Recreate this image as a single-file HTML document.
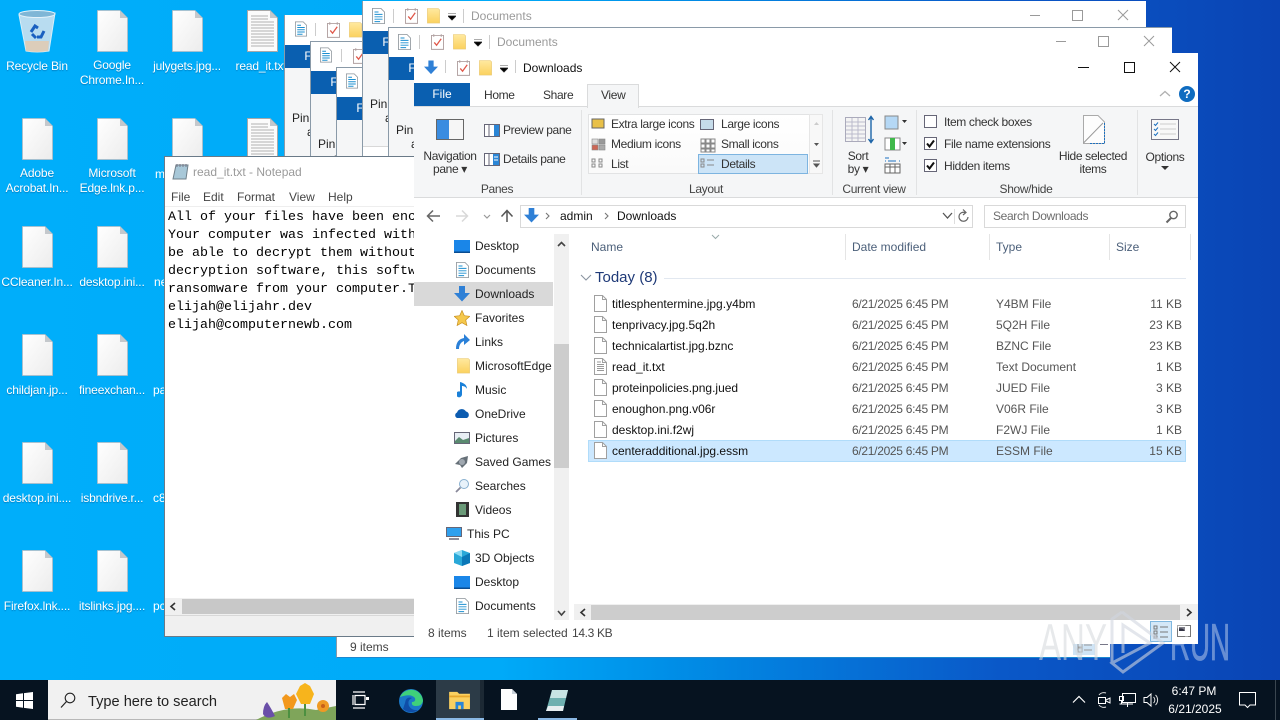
<!DOCTYPE html>
<html><head><meta charset="utf-8"><title>Desktop</title>
<style>
html,body{margin:0;padding:0}
body{width:1280px;height:720px;overflow:hidden;position:relative;font:12px/16px "Liberation Sans",sans-serif;color:#222;background:linear-gradient(90deg,#00aefa 0,#00aaf8 500px,#0090e8 660px,#0a58c8 1000px,#0a44b4 1280px)}
div,svg,span{position:absolute}
.t{white-space:nowrap}
.c{transform:translateX(-50%);text-align:center}
.l{color:#fff;white-space:nowrap;transform:translateX(-50%);text-align:center;letter-spacing:-.15px;text-shadow:0 1px 1px rgba(0,40,90,.35)}
.w{background:#fff}
.g{color:#9a9a9a}
.f{background:#0a5fb0;color:#fff;text-align:center}
.r{background:#f5f6f7}
.n{left:475px;color:#222}
.d{left:852px;color:#555;letter-spacing:-.3px}
.y{left:996px;color:#555}
.s{left:1120px;width:62px;text-align:right;color:#555}
.m{left:612px;color:#111}
.h{color:#4c607a;top:239px}
.rb{letter-spacing:-.35px}
</style></head><body>
<svg width="0" height="0" style="left:0;top:0">
<defs>
<linearGradient id="fg" x1="0" y1="0" x2="1" y2="1"><stop offset="0" stop-color="#fff"/><stop offset="1" stop-color="#ececec"/></linearGradient>
<linearGradient id="fo" x1="0" y1="0" x2="0" y2="1"><stop offset="0" stop-color="#ffe9a0"/><stop offset="1" stop-color="#fbd15e"/></linearGradient>
<symbol id="file" viewBox="0 0 31 42"><path d="M.5.5H23L30.5 8V41.5H.5Z" fill="url(#fg)" stroke="#b4bcc4" stroke-width=".8"/><path d="M23 .5V8H30.5Z" fill="#c4c8cc"/></symbol>
<symbol id="txt" viewBox="0 0 31 42"><path d="M.5.5H23L30.5 8V41.5H.5Z" fill="#fbfbfb" stroke="#a8a8a8"/><path d="M23 .5V8H30.5Z" fill="#c4c8cc"/><path d="M4 6H21M4 9H21M4 12H27M4 15H27M4 18H27M4 21H27M4 24H27M4 27H27M4 30H27M4 33H27M4 36H27" stroke="#b0b0b0"/></symbol>
<symbol id="sf" viewBox="0 0 13 17"><path d="M.5.5H8.5L12.500 4.500V16.500H.5Z" fill="#fff" stroke="#a0a0a0"/><path d="M8.500.5V4.500H12.500" fill="none" stroke="#a0a0a0"/></symbol>
<symbol id="st" viewBox="0 0 13 17"><path d="M.5.5H8.500L12.500 4.500V16.500H.5Z" fill="#fff" stroke="#a0a0a0"/><path d="M8.500.5V4.500H12.500" fill="none" stroke="#a0a0a0"/><path d="M3 4H7M3 6.500H10M3 8.500H10M3 10.500H10M3 12.500H10" stroke="#999"/></symbol>
<symbol id="doc" viewBox="0 0 16 20"><path d="M.5.500H11L15.500 5V19.500H.5Z" fill="#fff" stroke="#8a9298"/><path d="M3 5H8M3 8H13M3 11H13M3 14H13M3 17H10" stroke="#1b8fd0" stroke-width="1.200"/></symbol>
<symbol id="chk" viewBox="0 0 14 18"><path d="M.5 2.500H13.500V17.500H.5Z" fill="#fff" stroke="#b0a0a0"/><path d="M3 1V4M11 1V4" stroke="#b0a0a0"/><path d="M3.500 10L6 13L11 6" fill="none" stroke="#e0584a" stroke-width="1.400"/></symbol>
<symbol id="fol" viewBox="0 0 13 17"><path d="M0 .5H11.500L13 2V16H0Z" fill="url(#fo)" stroke="#e8c878" stroke-width=".6"/></symbol>
<symbol id="dl" viewBox="0 0 16 16"><path d="M5 0H11V7H16L8 15.500L0 7H5Z" fill="#2f80d6"/></symbol>
<symbol id="mon" viewBox="0 0 16 13"><rect width="16" height="12" fill="#1a86e8"/><rect y="11.500" width="16" height="1.500" fill="#0a4c90"/></symbol>
</defs></svg>

<!-- desktop icons -->
<svg style="left:17px;top:9px" width="40" height="44" viewBox="0 0 40 44"><path d="M2 6L38 4L32 42Q20 44 9 42Z" fill="#b8dcf0" stroke="#d8eef8"/><ellipse cx="20" cy="5" rx="18" ry="3.500" fill="#7fb6d6" stroke="#e4f2fa"/><path d="M8 32L32 32L31 42Q20 44 9 42Z" fill="#e8c8a8" opacity=".75"/><path d="M14 23l4-6 3 2M27 22l-3 6h-4M15 25l4 4" fill="none" stroke="#1a60c0" stroke-width="3"/></svg>
<svg style="left:97px;top:10px" width="31" height="42"><use href="#file" width="31" height="42"/></svg>
<svg style="left:172px;top:10px" width="31" height="42"><use href="#file" width="31" height="42"/></svg>
<svg style="left:247px;top:10px" width="31" height="42"><use href="#txt" width="31" height="42"/></svg>
<svg style="left:22px;top:118px" width="31" height="42"><use href="#file" width="31" height="42"/></svg>
<svg style="left:97px;top:118px" width="31" height="42"><use href="#file" width="31" height="42"/></svg>
<svg style="left:172px;top:118px" width="31" height="42"><use href="#file" width="31" height="42"/></svg>
<svg style="left:247px;top:118px" width="31" height="42"><use href="#txt" width="31" height="42"/></svg>
<svg style="left:22px;top:226px" width="31" height="42"><use href="#file" width="31" height="42"/></svg>
<svg style="left:97px;top:226px" width="31" height="42"><use href="#file" width="31" height="42"/></svg>
<svg style="left:22px;top:334px" width="31" height="42"><use href="#file" width="31" height="42"/></svg>
<svg style="left:97px;top:334px" width="31" height="42"><use href="#file" width="31" height="42"/></svg>
<svg style="left:22px;top:442px" width="31" height="42"><use href="#file" width="31" height="42"/></svg>
<svg style="left:97px;top:442px" width="31" height="42"><use href="#file" width="31" height="42"/></svg>
<svg style="left:22px;top:550px" width="31" height="42"><use href="#file" width="31" height="42"/></svg>
<svg style="left:97px;top:550px" width="31" height="42"><use href="#file" width="31" height="42"/></svg>
<div class="l" style="left:37px;top:58px">Recycle Bin</div>
<div class="l" style="left:112px;top:58px;line-height:15px">Google<br>Chrome.In...</div>
<div class="l" style="left:187px;top:58px">julygets.jpg...</div>
<div class="l" style="left:261px;top:58px">read_it.txt</div>
<div class="l" style="left:37px;top:166px;line-height:15px">Adobe<br>Acrobat.In...</div>
<div class="l" style="left:112px;top:166px;line-height:15px">Microsoft<br>Edge.lnk.p...</div>
<div class="l" style="left:37px;top:274px">CCleaner.In...</div>
<div class="l" style="left:112px;top:274px">desktop.ini...</div>
<div class="l" style="left:37px;top:382px">childjan.jp...</div>
<div class="l" style="left:112px;top:382px">fineexchan...</div>
<div class="l" style="left:37px;top:490px">desktop.ini....</div>
<div class="l" style="left:112px;top:490px">isbndrive.r...</div>
<div class="l" style="left:37px;top:598px">Firefox.lnk....</div>
<div class="l" style="left:112px;top:598px">itslinks.jpg....</div>
<div class="t" style="left:155px;top:166px;color:#fff">m</div>
<div class="t" style="left:154px;top:274px;color:#fff">ne</div>
<div class="t" style="left:153px;top:382px;color:#fff">pa</div>
<div class="t" style="left:153px;top:490px;color:#fff">c8</div>
<div class="t" style="left:153px;top:598px;color:#fff">pc</div>

<!-- W1 -->
<div class="w" style="left:284px;top:15px;width:400px;height:615px;border-left:1px solid #8a9aa8;box-sizing:border-box;overflow:hidden">
<div class="f" style="left:0;top:30px;width:60px;height:23px;line-height:23px;text-indent:-14px">F</div>
<div class="r" style="left:0;top:53px;width:400px;height:90px"></div>
<div class="t" style="left:7px;top:95px">Pin</div>
<div class="t" style="left:22px;top:109px">a</div>
<svg style="left:10px;top:6px" width="12" height="16"><use href="#doc" width="12" height="16"/></svg>
<div style="left:30px;top:8px;width:1px;height:13px;background:#ccc"></div>
<svg style="left:42px;top:6px" width="13" height="17"><use href="#chk" width="13" height="17"/></svg>
<svg style="left:64px;top:7px" width="13" height="16"><use href="#fol" width="13" height="16"/></svg>
</div>
<!-- W2 -->
<div class="w" style="left:310px;top:41px;width:400px;height:589px;border-left:1px solid #8a9aa8;border-top:1px solid #8a9aa8;box-sizing:border-box;overflow:hidden">
<div class="f" style="left:0;top:29px;width:60px;height:23px;line-height:23px;text-indent:-14px">F</div>
<div class="r" style="left:0;top:52px;width:400px;height:90px"></div>
<div class="t" style="left:7px;top:94px">Pin</div>
<div class="t" style="left:22px;top:108px">a</div>
<svg style="left:9px;top:5px" width="12" height="16"><use href="#doc" width="12" height="16"/></svg>
<div style="left:30px;top:7px;width:1px;height:13px;background:#ccc"></div>
<svg style="left:42px;top:5px" width="13" height="17"><use href="#chk" width="13" height="17"/></svg>
</div>
<!-- W3 -->
<div class="w" style="left:336px;top:67px;width:774px;height:591px;border-left:1px solid #8a9aa8;border-top:1px solid #8a9aa8;border-bottom:1px solid #1c88d0;box-sizing:border-box;overflow:hidden">
<div class="f" style="left:0;top:29px;width:60px;height:23px;line-height:23px;text-indent:-14px">F</div>
<div class="r" style="left:0;top:52px;width:400px;height:90px"></div>
<svg style="left:9px;top:5px" width="12" height="16"><use href="#doc" width="12" height="16"/></svg>
<div class="t" style="left:13px;top:571px;color:#444">9 items</div>
<div style="left:736px;top:566px;width:22px;height:21px;background:#cfe4f5"></div>
<svg style="left:739px;top:569px" width="34" height="16"><path d="M2 1h4v4h-4zM2 6h4v4h-4zM2 11h4v4h-4zM8 3h8M8 8h8M8 13h8" fill="none" stroke="#999"/><rect x="24" y="2" width="8" height="6" fill="#778"/></svg>
</div>
<!-- W4 -->
<div class="w" style="left:362px;top:1px;width:784px;height:300px;border-left:1px solid #8a9aa8;box-sizing:border-box;overflow:hidden">
<div class="f" style="left:0;top:30px;width:60px;height:23px;line-height:23px;text-indent:-14px">F</div>
<div class="r" style="left:0;top:53px;width:784px;height:92px"></div>
<div style="left:0;top:145px;width:784px;height:1px;background:#d8d8d8"></div>
<div class="t" style="left:7px;top:95px">Pin</div>
<div class="t" style="left:22px;top:109px">a</div>
<svg style="left:9px;top:7px" width="13" height="16"><use href="#doc" width="13" height="16"/></svg>
<div style="left:30px;top:8px;width:1px;height:14px;background:#ccc"></div>
<svg style="left:42px;top:6px" width="13" height="17"><use href="#chk" width="13" height="17"/></svg>
<svg style="left:64px;top:7px" width="13" height="16"><use href="#fol" width="13" height="16"/></svg>
<svg style="left:85px;top:12px" width="8" height="8"><path d="M0 0h8M0 3h8L4 7z" stroke="#222" stroke-width=".8"/></svg>
<div style="left:100px;top:8px;width:1px;height:14px;background:#ccc"></div>
<div class="t g" style="left:108px;top:7px">Documents</div>
<svg style="left:667px;top:6px" width="100" height="16"><path d="M0 8.500H10M42.500 3.500h10v10h-10zM88 3l10 10M98 3L88 13" fill="none" stroke="#9a9a9a"/></svg>
</div>
<!-- W5 -->
<div class="w" style="left:388px;top:27px;width:784px;height:300px;border-left:1px solid #8a9aa8;border-top:1px solid #8a9aa8;box-sizing:border-box;overflow:hidden">
<div class="f" style="left:0;top:29px;width:60px;height:23px;line-height:23px;text-indent:-14px">F</div>
<div class="r" style="left:0;top:52px;width:784px;height:92px"></div>
<div class="t" style="left:7px;top:94px">Pin</div>
<div class="t" style="left:22px;top:108px">a</div>
<svg style="left:9px;top:6px" width="13" height="16"><use href="#doc" width="13" height="16"/></svg>
<div style="left:30px;top:7px;width:1px;height:14px;background:#ccc"></div>
<svg style="left:42px;top:5px" width="13" height="17"><use href="#chk" width="13" height="17"/></svg>
<svg style="left:64px;top:6px" width="13" height="16"><use href="#fol" width="13" height="16"/></svg>
<svg style="left:85px;top:11px" width="8" height="8"><path d="M0 0h8M0 3h8L4 7z" stroke="#222" stroke-width=".8"/></svg>
<div style="left:100px;top:7px;width:1px;height:14px;background:#ccc"></div>
<div class="t g" style="left:108px;top:6px">Documents</div>
<svg style="left:667px;top:5px" width="100" height="16"><path d="M0 8.500H10M42.500 3.500h10v10h-10zM88 3l10 10M98 3L88 13" fill="none" stroke="#9a9a9a"/></svg>
</div>

<!-- Notepad -->
<div class="w" style="left:164px;top:156px;width:250px;height:481px;border-left:1px solid #6a7a88;border-top:1px solid #6a7a88;border-bottom:1px solid #6a7a88;box-sizing:border-box;overflow:hidden">
<svg style="left:7px;top:6px" width="18" height="18" viewBox="0 0 18 18"><path d="M4 2H16L14 16H1Z" fill="#a8c8d8" stroke="#70808a"/><path d="M5 1V4M8 1V4M11 1V4M14 1V4" stroke="#778"/></svg>
<div class="t g" style="left:28px;top:7px">read_it.txt - Notepad</div>
<div class="t" style="left:6px;top:32px;color:#444">File</div>
<div class="t" style="left:38px;top:32px;color:#444">Edit</div>
<div class="t" style="left:72px;top:32px;color:#444">Format</div>
<div class="t" style="left:124px;top:32px;color:#444">View</div>
<div class="t" style="left:163px;top:32px;color:#444">Help</div>
<div style="left:0;top:49px;width:250px;height:1px;background:#eee"></div>
<div class="t" style="left:3px;top:52px;font:13.33px/18px 'Liberation Mono',monospace;color:#000">All of your files have been encrypted<br>Your computer was infected with a<br>be able to decrypt them without a<br>decryption software, this software<br>ransomware from your computer.To<br>elijah@elijahr.dev<br>elijah@computernewb.com</div>
<div style="left:0;top:441px;width:250px;height:17px;background:#f0f0f0"></div>
<div style="left:17px;top:442px;width:233px;height:15px;background:#c8c8c8"></div>
<svg style="left:4px;top:445px" width="9" height="9"><path d="M6 1L2 4.500L6 8" fill="none" stroke="#333" stroke-width="1.600"/></svg>
<div style="left:0;top:458px;width:250px;height:22px;background:#f0f0f0;border-top:1px solid #d8d8d8"></div>
</div>

<!-- Explorer -->
<div class="w" style="left:414px;top:53px;width:784px;height:591px"></div>
<svg style="left:424px;top:60px" width="14" height="15"><use href="#dl" width="14" height="15"/></svg>
<div style="left:445px;top:60px;width:1px;height:13px;background:#ccc"></div>
<svg style="left:457px;top:59px" width="13" height="17"><use href="#chk" width="13" height="17"/></svg>
<svg style="left:479px;top:60px" width="13" height="16"><use href="#fol" width="13" height="16"/></svg>
<svg style="left:500px;top:65px" width="8" height="8"><path d="M0 0h8M0 3h8L4 7z" stroke="#222" stroke-width=".8"/></svg>
<div style="left:515px;top:60px;width:1px;height:13px;background:#ccc"></div>
<div class="t" style="left:523px;top:60px;color:#111">Downloads</div>
<svg style="left:1078px;top:60px" width="106" height="16"><path d="M0 7.500H11M46.500 2.500h10v10h-10zM92 2l10 10M102 2L92 12" fill="none" stroke="#111"/></svg>
<div class="f" style="left:414px;top:83px;width:56px;height:23px;line-height:23px">File</div>
<div class="t rb" style="left:484px;top:87px;color:#333">Home</div>
<div class="t rb" style="left:543px;top:87px;color:#333">Share</div>
<svg style="left:1159px;top:90px" width="12" height="8"><path d="M1 6L6 1.500L11 6" fill="none" stroke="#b0b0b0" stroke-width="1.300"/></svg>
<div class="c" style="left:1187px;top:86px;width:16px;height:16px;border-radius:8px;background:#0f6cc0;color:#fff;font-weight:bold;line-height:16px">?</div>
<div class="r" style="left:414px;top:106px;width:784px;height:92px;border-top:1px solid #dadbdc;border-bottom:1px solid #dadbdc;box-sizing:border-box"></div>
<div style="left:587px;top:84px;width:52px;height:24px;background:#f5f6f7;border:1px solid #dadbdc;border-bottom:0;box-sizing:border-box"></div>
<div class="t rb" style="left:601px;top:87px;color:#333">View</div>
<!-- ribbon separators -->
<div style="left:581px;top:110px;width:1px;height:85px;background:#e2e3e4"></div>
<div style="left:832px;top:110px;width:1px;height:85px;background:#e2e3e4"></div>
<div style="left:916px;top:110px;width:1px;height:85px;background:#e2e3e4"></div>
<div style="left:1137px;top:110px;width:1px;height:85px;background:#e2e3e4"></div>
<!-- panes -->
<svg style="left:436px;top:119px" width="28" height="21"><rect x=".5" y=".5" width="27" height="20" fill="#f6f6f6" stroke="#666"/><rect x="1" y="1" width="12" height="19" fill="#3a8ce0"/></svg>
<div class="t c rb" style="left:450px;top:150px;line-height:13px;color:#333">Navigation<br>pane ▾</div>
<svg style="left:484px;top:124px" width="16" height="13"><rect x=".5" y=".5" width="15" height="12" fill="#fff" stroke="#667"/><rect x="10" y="1" width="5" height="11" fill="#2b86d6"/><path d="M5 1V12" stroke="#667"/></svg>
<div class="t rb" style="left:503px;top:122px;color:#333">Preview pane</div>
<svg style="left:484px;top:153px" width="16" height="13"><rect x=".5" y=".5" width="15" height="12" fill="#fff" stroke="#667"/><rect x="9" y="1" width="6" height="11" fill="#2b86d6"/><path d="M5 1V12" stroke="#667"/><path d="M10 4h4M10 7h4" stroke="#fff"/></svg>
<div class="t rb" style="left:503px;top:151px;color:#333">Details pane</div>
<div class="t c rb" style="left:497px;top:181px;color:#444">Panes</div>
<!-- layout -->
<div style="left:588px;top:114px;width:222px;height:60px;background:linear-gradient(#fff,#fafafa);border:1px solid #e2e3e4;box-sizing:border-box"></div>
<div style="left:698px;top:154px;width:110px;height:20px;background:#cce4f7;border:1px solid #7db4e0;box-sizing:border-box"></div>
<svg style="left:591px;top:118px" width="16" height="52"><rect x="1" y="1" width="12" height="9" fill="#e8c048" stroke="#666"/><rect x="1" y="21" width="6" height="5" fill="#ddd" stroke="#888" stroke-width=".6"/><rect x="8" y="21" width="6" height="5" fill="#999" stroke="#888" stroke-width=".6"/><rect x="1" y="27" width="6" height="5" fill="#c65" stroke="#888" stroke-width=".6"/><rect x="8" y="27" width="6" height="5" fill="#aaa" stroke="#888" stroke-width=".6"/><path d="M1 41h3v3h-3zM1 46h3v3h-3zM8 41h3v3h-3zM8 46h3v3h-3z" fill="none" stroke="#888"/></svg>
<svg style="left:700px;top:118px" width="16" height="52"><rect x=".5" y="1.500" width="13" height="10" fill="#c6dcea" stroke="#667"/><path d="M1 21h4v4h-4zM6 21h4v4h-4zM11 21h4v4h-4zM1 26h4v4h-4zM6 26h4v4h-4zM11 26h4v4h-4zM1 31h4v3h-4zM6 31h4v3h-4zM11 31h4v3h-4z" fill="none" stroke="#888"/><path d="M1 41h3v3h-3zM1 46h3v3h-3zM7 42h7M7 47h7" fill="none" stroke="#888"/></svg>
<div class="t rb" style="left:611px;top:116px;color:#333">Extra large icons</div>
<div class="t rb" style="left:721px;top:116px;color:#333">Large icons</div>
<div class="t rb" style="left:611px;top:136px;color:#333">Medium icons</div>
<div class="t rb" style="left:721px;top:136px;color:#333">Small icons</div>
<div class="t rb" style="left:611px;top:156px;color:#333">List</div>
<div class="t rb" style="left:721px;top:156px;color:#333">Details</div>
<div style="left:809px;top:114px;width:14px;height:60px;background:#f8f8f8;border:1px solid #e6e6e6;box-sizing:border-box"></div>
<svg style="left:812px;top:120px" width="9" height="50"><path d="M2 5L4.500 2L7 5Z" fill="#ccc"/><path d="M2 23L4.500 26L7 23Z" fill="#555"/><path d="M1 41H8M2 44L4.500 47L7 44Z" stroke="#555" fill="#555"/></svg>
<div class="t c rb" style="left:706px;top:181px;color:#444">Layout</div>
<!-- current view -->
<svg style="left:845px;top:115px" width="30" height="29"><rect x=".5" y="2.500" width="20" height="24" fill="#f4f4f4" stroke="#aab"/><path d="M1 7H20M1 11H20M1 15H20M1 19H20M1 23H20M7 3V26M13 3V26" stroke="#bbc"/><path d="M26 2V27M23.500 5L26 1.500L28.500 5M23.500 24L26 27.500L28.500 24" fill="none" stroke="#1c64a8" stroke-width="1.400"/></svg>
<div class="t c rb" style="left:858px;top:150px;line-height:13px;color:#333">Sort<br>by ▾</div>
<svg style="left:884px;top:115px" width="24" height="60"><rect x="1" y="1" width="13" height="13" fill="#b5d8f5" stroke="#888"/><path d="M18 5L20.500 8L23 5Z M18 27L20.500 30L23 27Z" fill="#333"/><rect x="1" y="23" width="15" height="12" fill="#fff" stroke="#888"/><rect x="6" y="23" width="5" height="12" fill="#3fb84a"/><path d="M1 43h4M1 46h1M15 46h1M4 46h8" stroke="#1c70c0"/><rect x="1" y="49" width="15" height="9" fill="#fff" stroke="#666"/><path d="M6 49V58M11 49V58M1 52H16" stroke="#666"/></svg>
<div class="t c rb" style="left:874px;top:181px;color:#444">Current view</div>
<!-- show/hide -->
<div style="left:924px;top:115px;width:13px;height:13px;border:1px solid #667;background:#fff;box-sizing:border-box"></div>
<div style="left:924px;top:137px;width:13px;height:13px;border:1px solid #667;background:#fff;box-sizing:border-box"></div>
<div style="left:924px;top:159px;width:13px;height:13px;border:1px solid #667;background:#fff;box-sizing:border-box"></div>
<svg style="left:924px;top:137px" width="13" height="35"><path d="M3 6.500L5.500 9.500L10 3.500M3 28.500L5.500 31.500L10 25.500" fill="none" stroke="#111" stroke-width="2"/></svg>
<div class="t rb" style="left:944px;top:114px;color:#333">Item check boxes</div>
<div class="t rb" style="left:944px;top:136px;color:#333">File name extensions</div>
<div class="t rb" style="left:944px;top:158px;color:#333">Hidden items</div>
<svg style="left:1083px;top:115px" width="22" height="29"><path d="M.5.500H15L21.500 7V28.500H.5Z" fill="#fdfdfd" stroke="#aaa"/><path d="M.5 28L20 8" stroke="#999"/><path d="M21.500 8V28.500H6" fill="none" stroke="#1c70c0" stroke-dasharray="2 1"/></svg>
<div class="t c rb" style="left:1093px;top:150px;line-height:13px;color:#333">Hide selected<br>items</div>
<div class="t c rb" style="left:1026px;top:181px;color:#444">Show/hide</div>
<!-- options -->
<svg style="left:1151px;top:119px" width="28" height="21"><rect x=".5" y=".5" width="27" height="20" fill="#f8f8f8" stroke="#778"/><path d="M9 5H25M9 10H25M9 15H25" stroke="#ccc"/><path d="M3 5l1.500 1.500L7 3.500M3 10l1.500 1.500L7 8.500M3 15l1.500 1.500L7 13.500" fill="none" stroke="#1c70c0"/></svg>
<div class="t c rb" style="left:1165px;top:149px;color:#333">Options</div>
<svg style="left:1161px;top:166px" width="8" height="5"><path d="M0 0H8L4 4Z" fill="#333"/></svg>
<!-- address -->
<svg style="left:426px;top:209px" width="90" height="14"><path d="M14 7H2M7 1.500L1.500 7L7 12.500" fill="none" stroke="#666" stroke-width="1.500"/><path d="M30 7H41M36 1.500L41.500 7L36 12.500" fill="none" stroke="#d8d8d8" stroke-width="1.500"/><path d="M58 6L61 9L64 6" fill="none" stroke="#999" stroke-width="1.200"/><path d="M81 13V2M75.500 7.500L81 1.500L86.500 7.500" fill="none" stroke="#555" stroke-width="1.500"/></svg>
<div style="left:520px;top:205px;width:453px;height:23px;border:1px solid #d9d9d9;box-sizing:border-box"></div>
<svg style="left:524px;top:208px" width="15" height="15"><use href="#dl" width="15" height="15"/></svg>
<svg style="left:545px;top:212px" width="70" height="8"><path d="M1 1L4 4L1 7M60 1L63 4L60 7" fill="none" stroke="#777" stroke-width="1.100"/></svg>
<div class="t" style="left:560px;top:208px;color:#111">admin</div>
<div class="t" style="left:617px;top:208px;color:#111">Downloads</div>
<svg style="left:942px;top:209px" width="30" height="15"><path d="M1 4L5.500 9L10 4" fill="none" stroke="#555" stroke-width="1.300"/><path d="M12.500 0V15" stroke="#ddd"/><path d="M26 8A4.500 4.500 0 1 1 23 3.500M21 0.500L24 3.500L21 6" fill="none" stroke="#666" stroke-width="1.200"/></svg>
<div style="left:984px;top:205px;width:202px;height:23px;border:1px solid #d9d9d9;box-sizing:border-box"></div>
<div class="t rb" style="left:993px;top:208px;color:#6d6d6d">Search Downloads</div>
<svg style="left:1165px;top:210px" width="14" height="14"><circle cx="8.500" cy="5" r="3.700" fill="none" stroke="#666" stroke-width="1.400"/><path d="M6 8L1.500 12.500" stroke="#666" stroke-width="2"/></svg>
<!-- nav pane -->
<div style="left:414px;top:282px;width:139px;height:24px;background:#d9d9d9"></div>
<svg style="left:454px;top:240px" width="16" height="13"><use href="#mon"/></svg>
<svg style="left:456px;top:262px" width="13" height="16"><use href="#doc" width="13" height="16"/></svg>
<svg style="left:454px;top:286px" width="16" height="16"><use href="#dl" width="16" height="16"/></svg>
<svg style="left:454px;top:310px" width="16" height="16"><path d="M8 .5l2.300 5.200 5.500.6-4.100 3.700 1.200 5.500L8 12.700 3.100 15.500l1.200-5.500L.2 6.300l5.500-.6z" fill="#f5c84c" stroke="#c89020" stroke-width=".7"/></svg>
<svg style="left:456px;top:334px" width="14" height="15"><path d="M0 15C0 8 3 5 8 4V0L14 6L8 11V7C5 8 3 11 3 15Z" fill="#2a80d8"/></svg>
<svg style="left:457px;top:358px" width="13" height="16"><use href="#fol" width="13" height="16"/></svg>
<svg style="left:457px;top:382px" width="12" height="16"><path d="M5 1V12A3 3 0 1 1 3 9.500V0C7 1 10 3 10 7C9 5 7 4 5 4" fill="#1a80d8"/></svg>
<svg style="left:454px;top:408px" width="16" height="11"><path d="M3 10A3 3 0 0 1 3 4.500A5 5 0 0 1 12 3.500A3.500 3.500 0 0 1 13 10Z" fill="#0c5cb0"/></svg>
<svg style="left:454px;top:432px" width="16" height="12"><rect x=".5" y=".5" width="15" height="11" fill="#e8eef4" stroke="#667"/><path d="M1 9L5 5L9 8L15 6V11H1Z" fill="#5a8a70"/></svg>
<svg style="left:454px;top:455px" width="16" height="14"><path d="M1 9L7 3L14 1L13 8L8 13L6 10Z" fill="#667078"/><circle cx="8" cy="7" r="3" fill="#a0a8b0"/></svg>
<svg style="left:455px;top:478px" width="15" height="15"><circle cx="9" cy="6" r="4.500" fill="#e8f2fa" stroke="#88b0d0"/><path d="M5.500 9.500L1 14" stroke="#889" stroke-width="1.800"/></svg>
<svg style="left:456px;top:502px" width="13" height="15"><rect width="13" height="15" fill="#333"/><rect x="3" y="2" width="7" height="11" fill="#6a9a78"/></svg>
<svg style="left:446px;top:527px" width="16" height="14"><rect x=".5" y=".5" width="15" height="9" fill="#2fa0ee" stroke="#667"/><path d="M3 12H13" stroke="#667" stroke-width="1.500"/></svg>
<svg style="left:454px;top:550px" width="16" height="16"><path d="M8 0L16 3V13L8 16L0 13V3Z" fill="#29a8d8"/><path d="M8 7V16L16 13V3Z" fill="#0b78b8"/><path d="M0 3L8 7V0Z" fill="#8edcf4"/></svg>
<svg style="left:454px;top:576px" width="16" height="13"><use href="#mon"/></svg>
<svg style="left:456px;top:598px" width="13" height="16"><use href="#doc" width="13" height="16"/></svg>
<div class="t n" style="top:238px">Desktop</div>
<div class="t n" style="top:262px">Documents</div>
<div class="t n" style="top:286px">Downloads</div>
<div class="t n" style="top:310px">Favorites</div>
<div class="t n" style="top:334px">Links</div>
<div class="t n" style="top:358px;width:78px;overflow:hidden">MicrosoftEdge</div>
<div class="t n" style="top:382px">Music</div>
<div class="t n" style="top:406px">OneDrive</div>
<div class="t n" style="top:430px">Pictures</div>
<div class="t n" style="top:454px">Saved Games</div>
<div class="t n" style="top:478px">Searches</div>
<div class="t n" style="top:502px">Videos</div>
<div class="t" style="left:467px;top:526px">This PC</div>
<div class="t n" style="top:550px">3D Objects</div>
<div class="t n" style="top:574px">Desktop</div>
<div class="t n" style="top:598px">Documents</div>
<div style="left:554px;top:234px;width:15px;height:386px;background:#f0f0f0"></div>
<div style="left:554px;top:344px;width:15px;height:124px;background:#cdcdcd"></div>
<svg style="left:557px;top:240px" width="9" height="380"><path d="M1 6L4.500 2.500L8 6M1 371L4.500 375L8 371" fill="none" stroke="#444" stroke-width="1.600"/></svg>
<!-- headers -->
<div class="t h" style="left:591px">Name</div>
<div class="t h" style="left:852px">Date modified</div>
<div class="t h" style="left:996px">Type</div>
<div class="t h" style="left:1116px">Size</div>
<svg style="left:711px;top:234px" width="9" height="6"><path d="M1 1L4.500 4.500L8 1" fill="none" stroke="#9aa"/></svg>
<div style="left:845px;top:234px;width:1px;height:26px;background:#e5e5e5"></div>
<div style="left:989px;top:234px;width:1px;height:26px;background:#e5e5e5"></div>
<div style="left:1109px;top:234px;width:1px;height:26px;background:#e5e5e5"></div>
<div style="left:1190px;top:234px;width:1px;height:26px;background:#e5e5e5"></div>
<svg style="left:580px;top:274px" width="12" height="8"><path d="M1 1L6 6L11 1" fill="none" stroke="#8a94a0" stroke-width="1.100"/></svg>
<div class="t" style="left:595px;top:270px;font-size:15px;color:#1f3a78">Today (8)</div>
<div style="left:664px;top:278px;width:522px;height:1px;background:#e2e8f0"></div>
<!-- rows -->
<div style="left:588px;top:440px;width:598px;height:22px;background:#cce8ff;border:1px solid #b0dcfa;box-sizing:border-box"></div>
<svg style="left:594px;top:295px" width="13" height="17"><use href="#sf" width="13" height="17"/></svg>
<svg style="left:594px;top:316px" width="13" height="17"><use href="#sf" width="13" height="17"/></svg>
<svg style="left:594px;top:337px" width="13" height="17"><use href="#sf" width="13" height="17"/></svg>
<svg style="left:594px;top:358px" width="13" height="17"><use href="#st" width="13" height="17"/></svg>
<svg style="left:594px;top:379px" width="13" height="17"><use href="#sf" width="13" height="17"/></svg>
<svg style="left:594px;top:400px" width="13" height="17"><use href="#sf" width="13" height="17"/></svg>
<svg style="left:594px;top:421px" width="13" height="17"><use href="#sf" width="13" height="17"/></svg>
<svg style="left:594px;top:442px" width="13" height="17"><use href="#sf" width="13" height="17"/></svg>
<div class="t m" style="top:296px">titlesphentermine.jpg.y4bm</div><div class="t d" style="top:296px">6/21/2025 6:45 PM</div><div class="t y" style="top:296px">Y4BM File</div><div class="t s" style="top:296px">11 KB</div>
<div class="t m" style="top:317px">tenprivacy.jpg.5q2h</div><div class="t d" style="top:317px">6/21/2025 6:45 PM</div><div class="t y" style="top:317px">5Q2H File</div><div class="t s" style="top:317px">23 KB</div>
<div class="t m" style="top:338px">technicalartist.jpg.bznc</div><div class="t d" style="top:338px">6/21/2025 6:45 PM</div><div class="t y" style="top:338px">BZNC File</div><div class="t s" style="top:338px">23 KB</div>
<div class="t m" style="top:359px">read_it.txt</div><div class="t d" style="top:359px">6/21/2025 6:45 PM</div><div class="t y" style="top:359px">Text Document</div><div class="t s" style="top:359px">1 KB</div>
<div class="t m" style="top:380px">proteinpolicies.png.jued</div><div class="t d" style="top:380px">6/21/2025 6:45 PM</div><div class="t y" style="top:380px">JUED File</div><div class="t s" style="top:380px">3 KB</div>
<div class="t m" style="top:401px">enoughon.png.v06r</div><div class="t d" style="top:401px">6/21/2025 6:45 PM</div><div class="t y" style="top:401px">V06R File</div><div class="t s" style="top:401px">3 KB</div>
<div class="t m" style="top:422px">desktop.ini.f2wj</div><div class="t d" style="top:422px">6/21/2025 6:45 PM</div><div class="t y" style="top:422px">F2WJ File</div><div class="t s" style="top:422px">1 KB</div>
<div class="t m" style="top:443px">centeradditional.jpg.essm</div><div class="t d" style="top:443px">6/21/2025 6:45 PM</div><div class="t y" style="top:443px">ESSM File</div><div class="t s" style="top:443px">15 KB</div>
<!-- hscroll -->
<div style="left:574px;top:604px;width:624px;height:16px;background:#f0f0f0"></div>
<div style="left:591px;top:605px;width:589px;height:15px;background:#cdcdcd"></div>
<svg style="left:579px;top:608px" width="616" height="9"><path d="M6 1L2 4.500L6 8M608 1L612 4.500L608 8" fill="none" stroke="#333" stroke-width="1.600"/></svg>
<!-- status -->
<div class="t" style="left:428px;top:625px;color:#444">8 items</div>
<div class="t" style="left:487px;top:625px;color:#444">1 item selected</div>
<div class="t rb" style="left:572px;top:625px;color:#444">14.3 KB</div>
<div style="left:1150px;top:621px;width:22px;height:21px;background:#d4e8f8;border:1px solid #80b8e0;box-sizing:border-box"></div>
<svg style="left:1153px;top:625px" width="38" height="14"><path d="M1 1h3v3h-3zM1 6h3v3h-3zM1 11h3v2h-3zM7 2h8M7 7h8M7 12h8" fill="none" stroke="#777"/><rect x="24.500" y=".5" width="13" height="11" fill="#fff" stroke="#777"/><rect x="26" y="2" width="6" height="4" fill="#334"/></svg>

<!-- watermark -->
<svg style="left:1035px;top:605px" width="200" height="70" viewBox="0 0 200 70"><text x="4" y="55" font-family="Liberation Sans" font-size="52" fill="#d4d8dc" opacity=".55" textLength="68" lengthAdjust="spacingAndGlyphs">ANY</text><path d="M87 7L128 38L88 67L77 58L115 38L88 20V48M77 58V14L87 7" fill="none" stroke="#d0d6e0" stroke-opacity=".6" stroke-width="3"/><text x="135" y="55" font-family="Liberation Sans" font-size="52" fill="#fff" stroke="#fff" stroke-width=".8" opacity=".38" textLength="60" lengthAdjust="spacingAndGlyphs">RUN</text></svg>

<!-- taskbar -->
<div style="left:0;top:680px;width:1280px;height:40px;background:#061320"></div>
<svg style="left:16px;top:692px" width="17" height="17"><path d="M0 2.300L7 1.300V8H0ZM8 1.100L17 0V8H8ZM0 9H7V15.700L0 14.700ZM8 9H17V17L8 15.900Z" fill="#fff"/></svg>
<div style="left:48px;top:680px;width:288px;height:40px;background:#f1f1f1;border-bottom:1px solid #b8b8b8;box-sizing:border-box"></div>
<svg style="left:60px;top:692px" width="16" height="17"><circle cx="10" cy="6" r="4.800" fill="none" stroke="#222" stroke-width="1.100"/><path d="M6.500 9.500L1 15.500" stroke="#222" stroke-width="1.200"/></svg>
<div class="t" style="left:88px;top:693px;font-size:14.6px;line-height:18px;color:#222">Type here to search</div>
<svg style="left:256px;top:682px" width="80" height="38" viewBox="0 0 80 38"><path d="M0 38Q30 22 60 28L80 24V38Z" fill="#7fa55a"/><path d="M11 20Q15 26 19 34Q10 38 7 32Q7 24 11 20Z" fill="#6a4fa8"/><path d="M26 16l4-4 4 3 4-3 3 6-4 9h-8z" fill="#f2981c"/><path d="M44 4l5-3 5 3 4 8-4 10h-9l-5-10z" fill="#f7b41c"/><circle cx="67" cy="24" r="6" fill="#ef9a24"/><circle cx="67" cy="24" r="2" fill="#c86018"/><path d="M33 26V36M49 22V34" stroke="#4c9040" stroke-width="2"/></svg>
<svg style="left:352px;top:691px" width="17" height="19"><path d="M1 1H13M1 17H13M3 4.500H13V13.500H3ZM1 4V14" fill="none" stroke="#fff" stroke-width="1.200"/><rect x="14" y="6" width="3" height="3" fill="#fff"/></svg>
<svg style="left:398px;top:688px" width="26" height="26" viewBox="0 0 26 26"><circle cx="13" cy="13" r="12" fill="#1b78c8"/><path d="M2 9A12 12 0 0 1 25 13Q24 18 18 18Q13 18 14 14Q18 14 17 10Q13 5 2 9Z" fill="#3fd07a"/><path d="M7 15Q8 8 14 10Q9 12 11 18Q14 23 20 22A12 12 0 0 1 5 21Z" fill="#0f4ea8"/></svg>
<div style="left:436px;top:680px;width:44px;height:40px;background:#2c3b47"></div>
<div style="left:480px;top:680px;width:4px;height:40px;background:#1c2934"></div>
<svg style="left:449px;top:691px" width="22" height="19" viewBox="0 0 24 21"><path d="M0 1H9L11 3H23V20H0Z" fill="#fbd160"/><rect y="5" width="23" height="2" fill="#e8a82c"/><rect x="7" y="12" width="9" height="8" fill="#2a86d8"/><rect x="10" y="16" width="3" height="4" fill="#fbd160"/></svg>
<div style="left:436px;top:718px;width:48px;height:2px;background:#8ab8e4"></div>
<svg style="left:501px;top:689px" width="16" height="21"><path d="M0 0H11L16 5V21H0Z" fill="#fdfdfd"/><path d="M11 0V5H16Z" fill="#c8d0d8"/></svg>
<svg style="left:545px;top:689px" width="25" height="23" viewBox="0 0 25 23"><path d="M7 1H23L18 22H1Z" fill="#6fb0b0"/><path d="M7 1H23L21 9H5Z" fill="#c8e4e4"/><path d="M18 22H1L3 17H19Z" fill="#e8eef0"/></svg>
<div style="left:538px;top:718px;width:39px;height:2px;background:#8ab8e4"></div>
<!-- tray -->
<svg style="left:1072px;top:695px" width="14" height="9"><path d="M1 7.500L7 1.500L13 7.500" fill="none" stroke="#fff" stroke-width="1.200"/></svg>
<svg style="left:1097px;top:691px" width="14" height="18"><path d="M2 4A6 6 0 0 1 9 2M2 14A6 6 0 0 0 9 16" fill="none" stroke="#ddd"/><rect x="1.500" y="6.500" width="7" height="6" fill="none" stroke="#fff"/><path d="M9 9L13 7V12L9 10" fill="none" stroke="#fff"/></svg>
<svg style="left:1119px;top:693px" width="17" height="15"><rect x="3.500" y=".5" width="13" height="9" fill="none" stroke="#fff"/><path d="M.5 3.500h4v4h-4zM2.500 7.500V11M.5 11H14M8.500 10V14" fill="none" stroke="#fff"/></svg>
<svg style="left:1143px;top:692px" width="17" height="16"><path d="M1 5.500H4L8 2V14L4 10.500H1Z" fill="none" stroke="#fff"/><path d="M10.500 5A4 4 0 0 1 10.500 11M12.500 3A7 7 0 0 1 12.500 13" fill="none" stroke="#ddd"/></svg>
<div class="t c" style="left:1194px;top:683px;color:#fff">6:47 PM</div>
<div class="t c" style="left:1195px;top:701px;color:#fff">6/21/2025</div>
<svg style="left:1239px;top:692px" width="17" height="17"><path d="M.5.500H16.500V13H11L8.500 15.500L6 13H.5Z" fill="none" stroke="#fff"/></svg>
<div style="left:1275px;top:680px;width:1px;height:40px;background:#3a4650"></div>
</body></html>
